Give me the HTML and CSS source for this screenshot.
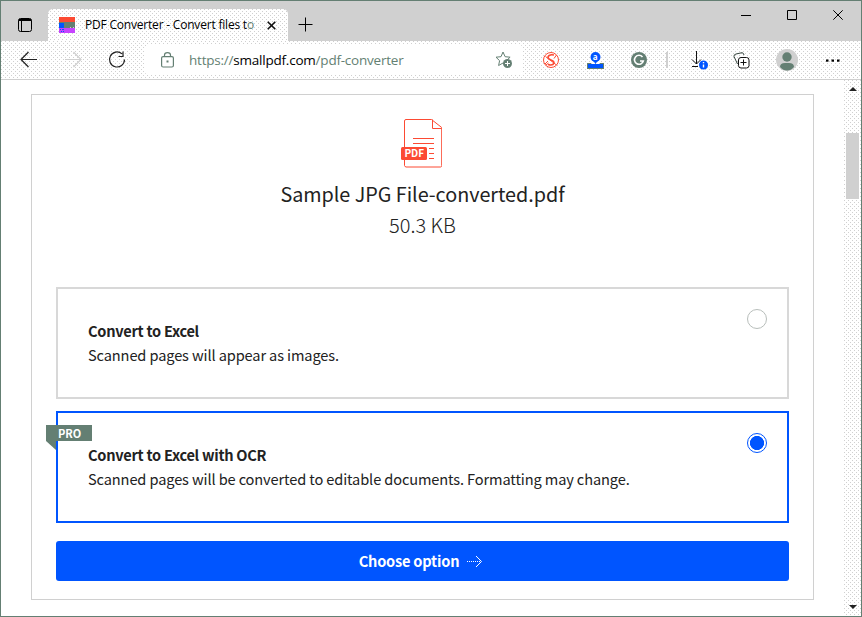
FILE: index.html
```html
<!DOCTYPE html>
<html lang="en">
<head>
<meta charset="utf-8">
<title>PDF Converter - Convert files to PDF</title>
<link rel="stylesheet" href="styles.css">
</head>
<body>
<div class="window">
  <header class="titlebar">
    <svg class="tab-menu" width="16" height="16" viewBox="0 0 16 16" fill="none" stroke="#000"><rect x="1.500" y="1.500" width="13" height="13" rx="2"/><path d="M1.500 3.500h13M2 2.500h12M4.500 4v10"/></svg>
    <div class="tab">
      <svg class="favicon" width="16" height="16" viewBox="0 0 16 16" shape-rendering="crispEdges"><path fill="#fc4a33" d="M0 0h16v5H0z"/><path fill="#05f" d="M0 6h5v5H0z"/><path fill="#647f73" d="M0 5h16v1H0zM5 6h11v5H5z"/><path fill="#c743ff" d="M0 11h16v5H0z"/><path fill="#05f" d="M1 12h1v1H1zM3 12h2v1H3zM2 14h1v1H2zM4 14h1v1H4z"/><path fill="#d0d0d0" d="M11 10h1v1h-1zM14 10h1v1h-1z"/></svg>
      <span class="tab-title">PDF Converter - Convert files t<i>o</i></span>
      <svg class="tab-close" width="9" height="9" viewBox="0 0 9 9" stroke="#111" stroke-width="1.600"><path d="M.7.7l7.600 7.600M8.300.7L.7 8.300"/></svg>
    </div>
    <svg class="new-tab" width="15" height="15" viewBox="0 0 15 15" stroke="#000"><path d="M.5 7.500h14M7.500.5v14"/></svg>
    <div class="controls">
      <svg width="10" height="10" viewBox="0 0 10 10" stroke="#000" fill="none"><path d="M0 5.500h10"/></svg>
      <svg width="10" height="10" viewBox="0 0 10 10" stroke="#000" fill="none"><path d="M.5.5h9v9h-9z"/></svg>
      <svg width="10" height="10" viewBox="0 0 10 10" stroke="#000" fill="none"><path d="M.3.3l9.400 9.400M9.700.3L.3 9.700"/></svg>
    </div>
  </header>
  <nav class="toolbar">
    <svg class="nav-icons" width="106" height="20" viewBox="0 0 106 20" fill="none" stroke="#222" stroke-width="1.200"><path d="M17 9.500H1.500M8.500 2L1 9.500 8.500 17"/><path stroke="#d0d0d0" d="M45 9.500h15.500M53.500 2l7.500 7.500-7.500 7.500"/><path d="M104.500 9.500a7.500 7.500 0 1 1-2.500-5.600M98.500 6.500h4.500V1.500"/></svg>
    <div class="address">
      <svg class="lock" width="13" height="16" viewBox="0 0 13 16" fill="none" stroke="#647f73" stroke-width="1.200"><rect x=".6" y="4.600" width="11.800" height="10.400" rx="1.500"/><path d="M3.500 4.500V3q0-2.400 3-2.400t3 2.400v1.500"/><path d="M5.500 9.500h2" stroke-width="2"/></svg>
      <span class="url">https://<b>smallpdf.com</b>/pdf-converter</span>
      <svg class="star" width="18" height="18" viewBox="0 0 18 18"><path d="M8 1l2.100 4.700 5 .5-3.700 3.500 1 4.800L8 12l-4.400 2.500 1-4.800L1 6.200l5-.5z" fill="#fff" stroke="#647f73"/><circle cx="12.500" cy="12.500" r="4.500" fill="#647f73"/><path d="M10 12.500h5M12.500 10v5" stroke="#fff"/></svg>
    </div>
    <div class="extensions">
      <svg class="ext-script" width="16" height="16" viewBox="0 0 16 16" fill="none" stroke="#fc4a33"><circle cx="8" cy="8" r="7.500" fill="#fff"/><path d="M11 3Q6 2 5 5q0 2 3 3t3 3q-1 3-6 1.500" stroke-width="1.600"/><path d="M2.500 4.500L13.500 13M2 12l3-3M13.500 3L11 6.500M3 13l2.500-2"/></svg>
      <svg class="ext-amazon" width="17" height="17" viewBox="0 0 17 17"><circle cx="8.500" cy="5" r="5" fill="#05f"/><path d="M6.500 9h4l-2 3z" fill="#05f"/><text x="5.800" y="7.500" class="badge-a">a</text><path d="M1 12h15v4H1z" fill="#05f"/><path d="M0 11.500h4M13 11.500h4M0 16.500h17M.5 11v6M16.500 11v6" stroke="#647f73"/></svg>
      <svg class="ext-grammar" width="16" height="16" viewBox="0 0 16 16" fill="none"><circle cx="8" cy="8" r="8" fill="#647f73"/><path d="M11.500 5A4.500 4.500 0 1 0 12.300 9H9" stroke="#fff" stroke-width="1.600"/></svg>
      <span class="separator"></span>
      <svg class="downloads" width="19" height="20" viewBox="0 0 19 20" fill="none" stroke="#111"><path d="M7.500 1v13M3 9.500L7.500 14 12 9.500M3 16.500h6"/><circle cx="14.500" cy="15" r="4.500" fill="#05f" stroke="none"/><path d="M14.500 14.500v3M14.500 12v1.300" stroke="#fff" stroke-width="1.400"/></svg>
      <svg class="collections" width="17" height="17" viewBox="0 0 17 17" fill="none" stroke="#111"><path d="M4.500 12L1 4.500q-.4-2 2-2.500L9 .7q1.500 0 2 2.300" stroke="#36453e"/><rect x="5.500" y="5.500" width="10.500" height="10.500" rx="2.500" fill="#fff"/><path d="M7.500 10.500h6M10.500 7.500v6"/></svg>
      <svg class="profile" width="22" height="22" viewBox="0 0 22 22"><circle cx="11" cy="11" r="11" fill="#d0d0d0"/><circle cx="11" cy="8" r="4.700" fill="#647f73"/><path fill="#647f73" d="M4 18q0-4 5-4h4q5 0 5 4-3 3.500-7 3.500T4 18z"/></svg>
      <svg class="more" width="14" height="3" viewBox="0 0 14 3" fill="#000"><rect x="0" y=".5" width="2.500" height="2.200"/><rect x="5.500" y=".5" width="2.500" height="2.200"/><rect x="11" y=".5" width="2.500" height="2.200"/></svg>
    </div>
  </nav>
  <div class="viewport">
    <main class="panel">
      <svg class="pdf-icon" width="41" height="49" viewBox="0 0 41 49" fill="none" stroke="#fc4a33"><path d="M30.500.5H5q-1.500 0-1.500 1.500v44.500q0 1 1.500 1.500h34.500q1.200 0 1.200-1.500V8.500zM31.500.5v9h9M12 19.500h21M12 24.500h21M28 29.500h5M28 34.500h5M28 39.500h5"/><rect y="28" width="26" height="13" rx="1.500" fill="#fc4a33" stroke="none"/><text x="3.500" y="38" textLength="19.500" class="pdf-text">PDF</text></svg>
      <h1 class="file-name">Sample JPG File-converted.pdf</h1>
      <p class="file-size">50.3 KB</p>
      <section class="option">
        <div class="option-copy"><h2>Convert to Excel</h2><p>Scanned pages will appear as images.</p></div>
        <span class="radio"></span>
      </section>
      <section class="option selected">
        <div class="ribbon">PRO</div>
        <div class="option-copy"><h2>Convert to Excel with OCR</h2><p>Scanned pages will be converted to editable documents. Formatting may change.</p></div>
        <span class="radio"></span>
      </section>
      <button class="choose"><span>Choose option</span><svg width="17" height="13" viewBox="0 0 17 13" fill="none" stroke="#fff"><path d="M1 6.500h14" stroke-dasharray="1 1"/><path d="M10 1l5.500 5.500L10 12"/></svg></button>
    </main>
    <aside class="scrollbar">
      <svg width="8" height="4" viewBox="0 0 8 4"><path d="M0 4l4-4 4 4z" fill="#222"/></svg>
      <span class="thumb"></span>
      <svg class="down" width="8" height="4" viewBox="0 0 8 4"><path d="M0 0l4 4 4-4z" fill="#222"/></svg>
    </aside>
  </div>
</div>
</body>
</html>
```
FILE: styles.css
```css
* { box-sizing: border-box; }
body { margin: 0; overflow: hidden; }
h1, h2, p { margin: 0; white-space: nowrap; }
svg { flex: none; display: block; }
.window { width: 862px; height: 617px; border: 1px solid #647f73; background: #fff; display: flex; flex-direction: column; font-family: "Noto Sans CJK JP", sans-serif; color: #222; }
.titlebar { height: 40px; flex: none; background: #d0d0d0; display: flex; align-items: flex-start; }
.tab-menu { margin: 16px 0 0 16px; }
.tab, .toolbar, .scrollbar {
  background-color: #fff;
  background-image: radial-gradient(circle at .5px .5px, #d0d0d0 .6px, transparent .61px), radial-gradient(circle at .5px .5px, #d0d0d0 .6px, transparent .61px);
  background-size: 4px 4px;
  background-position: 0 0, 2px 2px;
}
.tab { width: 240px; height: 32px; margin: 8px 0 0 15px; border-radius: 5px 5px 0 0; display: flex; align-items: center; padding: 0 12px 0 11px; }
.tab-title { width: 170px; margin-left: 10px; font: 12px/18px "Open Sans", sans-serif; letter-spacing: -.2px; color: #000; white-space: nowrap; }
.tab-title i { color: #647f73; font-style: normal; }
.tab-close { margin-left: 12px; }
.new-tab { margin: 16px 0 0 10px; }
.controls { display: flex; gap: 36px; margin: 9px 18px 0 auto; }
.toolbar { height: 39px; flex: none; border-bottom: 1px solid #d0d0d0; display: flex; align-items: center; }
.nav-icons { margin-left: 19px; }
.address { width: 378px; height: 30px; margin-left: 19px; background: #fff; border-radius: 4px; display: flex; align-items: center; padding: 0 10px 0 16px; }
.url { margin-left: 15px; font: 13.5px/20px "Open Sans", sans-serif; letter-spacing: -.22px; color: #647f73; white-space: nowrap; }
.url b { color: #000; font-weight: 400; }
.star { margin-left: auto; }
.extensions { display: flex; align-items: center; padding-left: 20px; }
.ext-amazon { margin-left: 28px; }
.ext-grammar { margin-left: 27px; }
.separator { width: 2px; height: 16px; margin-left: 19px; background: #d0d0d0; }
.downloads { margin-left: 21px; }
.collections { margin-left: 25px; }
.profile { margin-left: 26px; }
.more { margin-left: 28px; }
.badge-a { font: bold 8px "Open Sans", sans-serif; fill: #fff; }
.viewport { flex: 1; min-height: 0; display: flex; justify-content: space-between; }
.panel { width: 783px; height: 506px; margin: 14px 0 0 30px; border: 1px solid #d0d0d0; padding: 24px 24px 0; display: flex; flex-direction: column; }
.pdf-icon { margin-left: 345px; }
.pdf-text { font: bold 10px "Noto Sans CJK JP", sans-serif; fill: #fff; stroke: none; }
.file-name { align-self: center; margin-top: 9px; font-size: 19.8px; line-height: 34px; font-weight: 400; letter-spacing: -.03px; }
.file-size { align-self: center; font-size: 20px; line-height: 27px; font-weight: 300; }
.option { height: 112px; flex: none; margin-top: 49px; border: 2px solid #d8d8d8; padding: 30px 20px 0 30px; display: flex; justify-content: space-between; position: relative; }
.option.selected { margin-top: 12px; border-color: #05f; }
.option h2, .option p { font-size: 14.6px; line-height: 24px; letter-spacing: -.12px; }
.option h2 { font-weight: 700; letter-spacing: -.28px; }
.radio { width: 20px; height: 20px; margin-top: -10px; border: 1px solid #b8bebb; border-radius: 50%; }
.selected .radio { border-color: #05f; background: radial-gradient(circle, #05f 6.800px, transparent 7.300px); }
.ribbon { position: absolute; left: -12px; top: 12px; width: 46px; height: 16px; background: #647f73; color: #fff; font-size: 11px; line-height: 16px; font-weight: 700; padding-left: 12px; }
.ribbon::after { content: ""; position: absolute; left: 0; top: 16px; border-top: 9px solid #647f73; border-left: 10px solid transparent; }
.choose { height: 40px; flex: none; margin-top: 18px; border: 0; border-radius: 3px; background: #05f; color: #fff; display: flex; align-items: center; justify-content: center; gap: 7px; font: 700 14.6px/20px "Noto Sans CJK JP", sans-serif; letter-spacing: -.2px; padding: 0 3px 0 0; }
.scrollbar { width: 17px; display: flex; flex-direction: column; align-items: center; padding: 7px 0; }
.thumb { width: 13px; height: 66px; background: #d0d0d0; margin-top: 42px; }
.down { margin-top: auto; }
```
